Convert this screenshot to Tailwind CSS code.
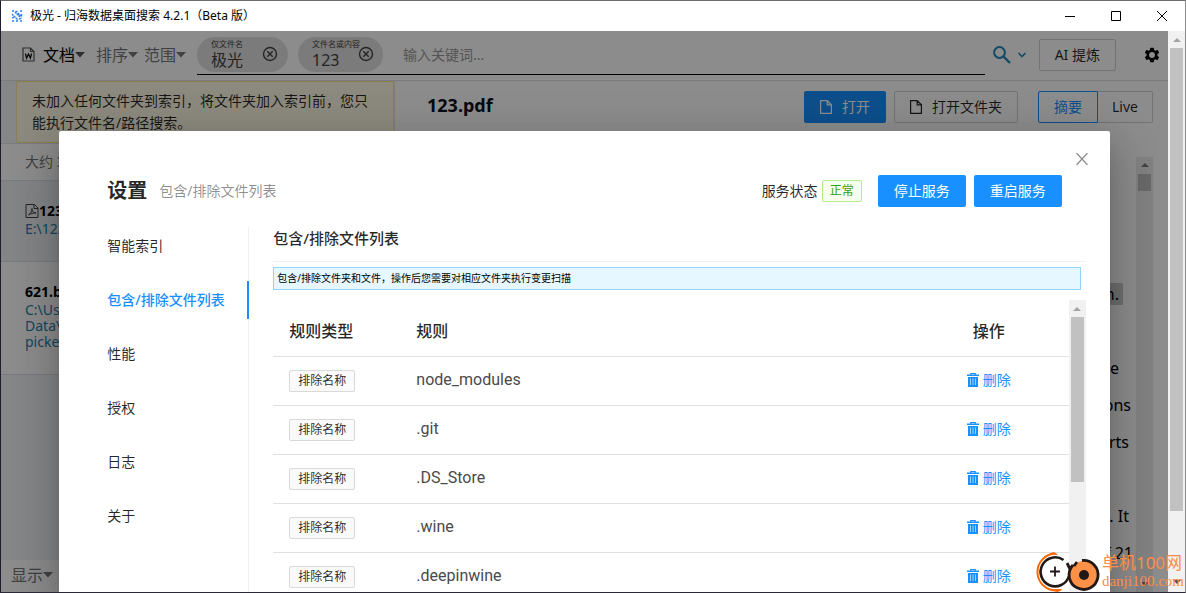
<!DOCTYPE html>
<html lang="zh-CN">
<head>
<meta charset="utf-8">
<title>极光 - 归海数据桌面搜索</title>
<script src="https://cdn.jsdelivr.net/npm/@tailwindcss/browser@4"></script>
</head>
<body class="h-screen overflow-hidden font-['Noto_Sans','Noto_Sans_CJK_SC',sans-serif] text-sm text-black/85">
<svg class="hidden">
  <symbol id="caret" viewBox="0 0 10 6"><path d="M0 0h10L5 5.5z" fill="currentColor"/></symbol>
  <symbol id="up" viewBox="0 0 8 4"><path d="M0 4h8L4 0z" fill="currentColor"/></symbol>
  <symbol id="down" viewBox="0 0 8 4"><path d="M0 0h8L4 4z" fill="currentColor"/></symbol>
  <symbol id="circle-x" viewBox="0 0 16 16"><g fill="none" stroke="currentColor" stroke-width="1.4"><circle cx="8" cy="8" r="6.5"/><path d="M5.3 5.3l5.4 5.4M10.7 5.3l-5.4 5.4"/></g></symbol>
  <symbol id="file" viewBox="0 0 12 14"><path d="M.6.6h6.6l4.2 4.2v8.6H.6zM7.2.6v4.2h4.2" fill="none" stroke="currentColor" stroke-width="1.2"/></symbol>
  <symbol id="trash" viewBox="0 0 12 14"><path d="M0 1.6h3.2V0h5.6v1.6H12V3H0zM4.4 1v.6h3.2V1z" fill="currentColor" fill-rule="evenodd"/><path d="M1 4h10v10H1z" fill="currentColor"/><path d="M3.5 5.500v6.500M6 5.500v6.500M8.500 5.500v6.500" stroke="#fff" stroke-width=".8" opacity=".75"/></symbol>
</svg>
<div class="flex h-full flex-col border border-t-[#6b6b6b] border-r-[#8a8a8a] border-b-[#2a2836] border-l-[#1f1c30]">
  <header class="flex h-[30px] shrink-0 items-center bg-white pl-2.5">
    <svg class="size-3" viewBox="0 0 12 12" fill="none" stroke="#2f7fe6" stroke-width="1.400"><path d="M1 1h2M4.500 1.500h2M9 1h2M1 4l2 2M4 2l5 5M7 3l3 3M10.500 4v3M1 8l3-1M3 6l4 4M8 9l3-1M1 11h2M5 11h2M9 11h2" stroke-dasharray="2 .5"/></svg>
    <h1 class="ml-[7px] text-xs text-black">极光 - 归海数据桌面搜索 4.2.1（Beta 版）</h1>
    <div class="ml-auto flex">
      <button aria-label="最小化" class="flex w-[46px] justify-center"><svg class="size-3" viewBox="0 0 12 12" stroke="#000"><path d="M1 6.5h10"/></svg></button>
      <button aria-label="最大化" class="flex w-[46px] justify-center"><svg class="size-3" viewBox="0 0 12 12" stroke="#000" fill="none"><path d="M1.5 1.5h9v9h-9z"/></svg></button>
      <button aria-label="关闭" class="flex w-[46px] justify-center"><svg class="size-3" viewBox="0 0 12 12" stroke="#000"><path d="M1 1l10 10M11 1L1 11"/></svg></button>
    </div>
  </header>

  <div class="flex min-h-0 flex-1">
    <div class="relative min-w-0 flex-1 overflow-hidden">
      <div class="flex h-full flex-col bg-white">
        <!-- search bar -->
        <div class="flex h-[50px] shrink-0 items-center border-b border-[#e0e0e0] pl-[21px] pr-2 pb-0.5">
          <svg class="h-[15px] w-[13px]" viewBox="0 0 13 15" fill="none" stroke="#555" stroke-width="1.2"><path d="M1 1h7.5L12 4.5V14H1zM8.5 1v3.5H12"/><path d="M3.400 6.500l1.200 4.500L6.500 7l1.900 4 1.200-4.500" stroke="#111" stroke-width="1.300"/></svg>
          <button class="ml-2 flex items-center text-base text-black">文档<svg class="h-1.5 w-2.5 text-[#555]"><use href="#caret"/></svg></button>
          <button class="ml-[11px] flex items-center text-base text-[#777]">排序<svg class="h-1.5 w-2.5"><use href="#caret"/></svg></button>
          <button class="ml-1.5 flex items-center text-base text-[#777]">范围<svg class="h-1.5 w-2.5"><use href="#caret"/></svg></button>
          <div class="ml-[11px] flex h-10 flex-1 items-start gap-2.5 border-b border-black pt-0.5">
            <div class="flex h-[35px] items-center justify-between gap-[19px] rounded-full bg-[#e0e0e0] pl-3.5 pr-2.5 text-[#444]">
              <div class="flex flex-col"><span class="text-[8px] leading-3">仅文件名</span><span class="text-base leading-5">极光</span></div>
              <button aria-label="移除极光"><svg class="size-4"><use href="#circle-x"/></svg></button>
            </div>
            <div class="flex h-[35px] items-center rounded-full bg-[#e0e0e0] pl-3.5 pr-[9px] text-[#444]">
              <div class="flex w-[46px] flex-col"><span class="whitespace-nowrap text-[8px] leading-3">文件名或内容</span><span class="text-base leading-5">123</span></div>
              <button aria-label="移除123"><svg class="size-4"><use href="#circle-x"/></svg></button>
            </div>
            <input aria-label="关键词" placeholder="输入关键词..." class="h-8 min-w-0 flex-1 px-2.5 pt-1 text-sm outline-none placeholder:text-[#9a9a9a]">
          </div>
          <button aria-label="搜索" class="ml-2 flex items-center gap-1.5 text-[#2188b8]">
            <svg class="size-[18px]" viewBox="0 0 18 18" fill="none" stroke="currentColor"><circle cx="6.500" cy="6.500" r="5.400" stroke-width="2"/><path d="M10.500 10.500L17 17" stroke-width="2.400"/></svg>
            <svg class="h-1.5 w-2.5" viewBox="0 0 10 6" fill="none" stroke="currentColor" stroke-width="1.600"><path d="M1.500 1L5 4.500 8.500 1"/></svg>
          </button>
          <button class="ml-3 h-8 rounded-xs border border-[#d0d0d0] px-[15px]">AI 提炼</button>
          <button aria-label="设置" class="ml-7 text-black"><svg class="size-4" viewBox="1 1 22 22" fill="currentColor"><path d="M19.430 12.980c.04-.32.07-.64.07-.98s-.03-.66-.07-.98l2.110-1.650a.5.5 0 0 0 .12-.64l-2-3.460a.5.5 0 0 0-.61-.22l-2.490 1a7.300 7.300 0 0 0-1.690-.98l-.38-2.650A.49.49 0 0 0 14 2h-4a.49.49 0 0 0-.49.42l-.38 2.650c-.61.25-1.170.59-1.690.98l-2.490-1a.5.5 0 0 0-.61.22l-2 3.460a.5.5 0 0 0 .12.64l2.110 1.650a8 8 0 0 0 0 1.960l-2.110 1.650a.5.5 0 0 0-.12.640l2 3.460c.12.220.390.300.610.220l2.490-1c.52.4 1.080.73 1.690.98l.38 2.650c.03.24.24.42.49.42h4c.25 0 .46-.18.49-.42l.38-2.650a7.700 7.700 0 0 0 1.690-.98l2.490 1c.23.09.49 0 .61-.22l2-3.460a.5.5 0 0 0-.12-.64zM12 16a4 4 0 1 1 0-8 4 4 0 0 1 0 8z"/></svg></button>
        </div>

        <div class="flex min-h-0 flex-1">
          <!-- results -->
          <aside class="flex w-[394px] shrink-0 flex-col border-r border-[#e4e4e4] bg-[#f3f5f8]">
            <p class="ml-[15px] rounded-xs border border-[#ffe58f] bg-[#fffbe6] px-[15px] py-2 leading-[22px]">未加入任何文件夹到索引，将文件夹加入索引前，您只能执行文件名/路径搜索。</p>
            <div class="flex h-[38px] items-center border-y border-[#dde1ea] bg-white pl-6 text-[#777]">大约 3 条结果</div>
            <ul>
              <li class="h-[81px] border-b border-[#dde1ea] bg-[#eef1f5] pl-6 pt-[19px]">
                <div class="flex h-[21px] items-center font-bold text-black"><svg class="size-3.5" viewBox="0 0 14 14" fill="none" stroke="#444"><path d="M1 .5h8.500L13 4v9.500H1zM9 .5V4.500h4"/><path d="M3.500 11c2-1 3.500-4 3.500-6.500 0 3 1.500 4.500 4 4.500-3 0-5 .5-7.500 2z"/></svg>123.pdf</div>
                <p class="leading-4 text-[#2a80a8]">E:\123.pdf</p>
              </li>
              <li class="h-[113px] border-b border-[#dde1ea] bg-white pl-6 pt-5">
                <div class="leading-5 font-bold text-black">621.bmp</div>
                <p class="leading-4 text-[#2a80a8]">C:\Users\App<br>Data\Roaming<br>picker</p>
              </li>
            </ul>
            <div class="mt-auto flex h-8 items-center bg-white pb-0.5 pl-2.5">
              <button class="flex items-center text-base text-[#777]">显示<svg class="h-1.5 w-2.5"><use href="#caret"/></svg></button>
            </div>
          </aside>
          <!-- preview -->
          <main class="flex min-w-0 flex-1 flex-col pl-8 pr-[15px]">
            <div class="flex shrink-0 items-start pt-2.5">
              <h2 class="text-lg leading-7 font-bold text-[#0b1220]">123.pdf</h2>
              <button class="ml-auto flex h-8 items-center gap-2.5 rounded-xs bg-[#1890ff] px-4 text-white"><svg class="h-3.5 w-3"><use href="#file"/></svg>打开</button>
              <button class="ml-2 flex h-8 items-center gap-2.5 rounded-xs border border-[#d0d0d0] px-[15px]"><svg class="h-3.5 w-3"><use href="#file"/></svg>打开文件夹</button>
              <button class="ml-5 h-8 rounded-l-xs border border-[#1890ff] px-[15px] text-[#1890ff]">摘要</button>
              <button class="h-8 rounded-r-xs border border-l-0 border-[#d0d0d0] px-3.5">Live</button>
            </div>
            <div class="mt-[34px] flex min-h-0 flex-1">
              <div class="flex flex-1 flex-col items-end overflow-hidden pr-[3px] pt-[119px] text-base leading-[37px] text-black">
                <p class="pr-2.5"><mark class="bg-[#cacaca] pr-1 text-black">n.</mark></p>
                <p>&nbsp;</p>
                <p class="pr-3.5">e</p>
                <p class="pr-0.5">ons</p>
                <p class="pr-1">rts</p>
                <p>&nbsp;</p>
                <p class="pr-1">. It</p>
                <p>f 21</p>
              </div>
              <div class="flex w-[17px] flex-col items-center justify-between bg-[#ececec] py-1.5 text-[#777]">
                <div class="flex flex-col items-center gap-[7px]"><svg class="h-1 w-2"><use href="#up"/></svg><div class="h-[17px] w-[13px] bg-[#bdbdbd]"></div></div>
                <svg class="h-1 w-2"><use href="#down"/></svg>
              </div>
            </div>
          </main>
        </div>
      </div>

      <!-- settings dialog -->
      <div class="absolute inset-0 bg-black/45 pt-[100px]">
        <section role="dialog" aria-label="设置" class="relative mx-auto flex h-full w-[90%] flex-col rounded-t-xs bg-white pt-11 shadow-[0_11px_15px_-7px_rgba(0,0,0,0.2),0_24px_38px_3px_rgba(0,0,0,0.14),0_9px_46px_8px_rgba(0,0,0,0.12)]">
          <button aria-label="关闭设置" class="absolute right-[22px] top-[22px]"><svg class="size-3" viewBox="0 0 12 12" stroke="#8c8c8c" stroke-width="1.300"><path d="M.5 0l11 12M11.500 0L.5 12"/></svg></button>
          <div class="flex h-8 shrink-0 items-center px-12">
            <h2 class="text-xl font-bold">设置</h2>
            <span class="ml-3 text-black/45">包含/排除文件列表</span>
            <span class="ml-auto">服务状态</span>
            <span class="ml-1 rounded-xs border border-[#b7eb8f] bg-[#f6ffed] px-[7px] text-xs leading-5 text-[#389e0d]">正常</span>
            <button class="ml-4 h-8 rounded-xs bg-[#1890ff] px-4 text-white">停止服务</button>
            <button class="ml-2 h-8 rounded-xs bg-[#1890ff] px-4 text-white">重启服务</button>
          </div>
          <div class="mt-5 flex min-h-0 flex-1 pl-12 pr-6">
            <nav class="flex w-[142px] shrink-0 flex-col gap-4 border-r border-[#f0f0f0] leading-[38px]">
              <a href="#">智能索引</a>
              <a href="#" class="-mr-px border-r-2 border-[#1890ff] font-medium text-[#1890ff]">包含/排除文件列表</a>
              <a href="#">性能</a>
              <a href="#">授权</a>
              <a href="#">日志</a>
              <a href="#">关于</a>
            </nav>
            <div class="ml-6 flex min-w-0 flex-1 flex-col">
              <h3 class="border-b border-[#f0f0f0] pb-3 text-[15px] leading-[22px] font-medium">包含/排除文件列表</h3>
              <p class="mr-[5px] mt-[5px] border border-[#91d5ff] bg-[#e6f7ff] px-[3px] text-[10px] leading-[21px] text-black">包含/排除文件夹和文件，操作后您需要对相应文件夹执行变更扫描</p>
              <div class="mt-2.5 flex min-h-0 flex-1">
                <div class="min-w-0 flex-1 overflow-hidden">
                  <table class="w-full table-fixed text-left">
                    <thead>
                      <tr class="h-14 border-b border-[#e0e0e0] text-base [&>th]:pt-1.5 [&>th]:font-medium"><th class="w-[127px] pl-4">规则类型</th><th class="pl-4">规则</th><th class="w-40 text-center">操作</th></tr>
                    </thead>
                    <tbody class="[&>tr]:h-[49px] [&>tr]:border-b [&>tr]:border-[#e0e0e0] [&_td+td]:pb-0.5">
                      <tr><td class="pl-4"><span class="inline-block rounded-xs border border-[#d9d9d9] bg-[#fafafa] px-2 text-xs leading-5">排除名称</span></td><td class="pl-4 font-[Roboto] text-base text-[#4a4a4a]">node_modules</td><td><button class="mx-auto flex items-center gap-1 text-[#1890ff]"><svg class="h-3.5 w-3"><use href="#trash"/></svg>删除</button></td></tr>
                      <tr><td class="pl-4"><span class="inline-block rounded-xs border border-[#d9d9d9] bg-[#fafafa] px-2 text-xs leading-5">排除名称</span></td><td class="pl-4 font-[Roboto] text-base text-[#4a4a4a]">.git</td><td><button class="mx-auto flex items-center gap-1 text-[#1890ff]"><svg class="h-3.5 w-3"><use href="#trash"/></svg>删除</button></td></tr>
                      <tr><td class="pl-4"><span class="inline-block rounded-xs border border-[#d9d9d9] bg-[#fafafa] px-2 text-xs leading-5">排除名称</span></td><td class="pl-4 font-[Roboto] text-base text-[#4a4a4a]">.DS_Store</td><td><button class="mx-auto flex items-center gap-1 text-[#1890ff]"><svg class="h-3.5 w-3"><use href="#trash"/></svg>删除</button></td></tr>
                      <tr><td class="pl-4"><span class="inline-block rounded-xs border border-[#d9d9d9] bg-[#fafafa] px-2 text-xs leading-5">排除名称</span></td><td class="pl-4 font-[Roboto] text-base text-[#4a4a4a]">.wine</td><td><button class="mx-auto flex items-center gap-1 text-[#1890ff]"><svg class="h-3.5 w-3"><use href="#trash"/></svg>删除</button></td></tr>
                      <tr><td class="pl-4"><span class="inline-block rounded-xs border border-[#d9d9d9] bg-[#fafafa] px-2 text-xs leading-5">排除名称</span></td><td class="pl-4 font-[Roboto] text-base text-[#4a4a4a]">.deepinwine</td><td><button class="mx-auto flex items-center gap-1 text-[#1890ff]"><svg class="h-3.5 w-3"><use href="#trash"/></svg>删除</button></td></tr>
                    </tbody>
                  </table>
                </div>
                <div class="flex w-[17px] flex-col items-center gap-1.5 bg-[#f1f1f1] pt-[7px] text-[#a3a3a3]">
                  <svg class="h-1 w-2"><use href="#up"/></svg>
                  <div class="h-[165px] w-[13px] bg-[#c1c1c1]"></div>
                </div>
              </div>
            </div>
          </div>
        </section>
      </div>
    </div>

    <div class="flex w-[17px] shrink-0 flex-col items-center bg-[#f1f1f1] pb-2 pt-[7px] text-[#a3a3a3]">
      <svg class="h-1 w-2 shrink-0"><use href="#up"/></svg>
      <div class="mt-1.5 h-[463px] w-[13px] bg-[#c1c1c1]"></div>
      <svg class="mt-auto h-1 w-2 shrink-0 text-[#505050]"><use href="#down"/></svg>
    </div>
  </div>
</div>

<!-- site watermark -->
<div class="absolute bottom-0 right-0.5 flex items-center text-[#ff8c4a]">
  <svg class="h-[42px] w-[66px]" viewBox="0 0 66 42" fill="none">
    <circle cx="19" cy="21" r="14.500" fill="#fff"/>
    <path d="M19 2.500A18.500 18.500 0 0 0 21 39.500" stroke="#ff6a00" stroke-width="2"/>
    <path d="M13 3.500Q18-1 22 4zM15 38Q23 44 26 38z" fill="#ff6a00"/>
    <path d="M27.500 9A14.500 14.500 0 1 0 33 25" stroke="#231815" stroke-width="2.600"/>
    <path d="M14 20.500h10M19 15.500v10" stroke="#231815" stroke-width="1.800"/>
    <circle cx="48" cy="24" r="14" fill="#ff9048"/>
    <path d="M46 9.500A14.500 14.500 0 1 1 37 14M31 12l3 6M41 11l-3 4" stroke="#231815" stroke-width="2.800"/>
    <circle cx="48" cy="24" r="5" fill="#231815"/>
  </svg>
  <div class="flex flex-col pb-0.5">
    <span class="text-[17px] leading-5">单机100网</span>
    <span class="font-['Liberation_Serif',serif] text-[15px] leading-4">danji100.com</span>
  </div>
</div>
</body>
</html>
